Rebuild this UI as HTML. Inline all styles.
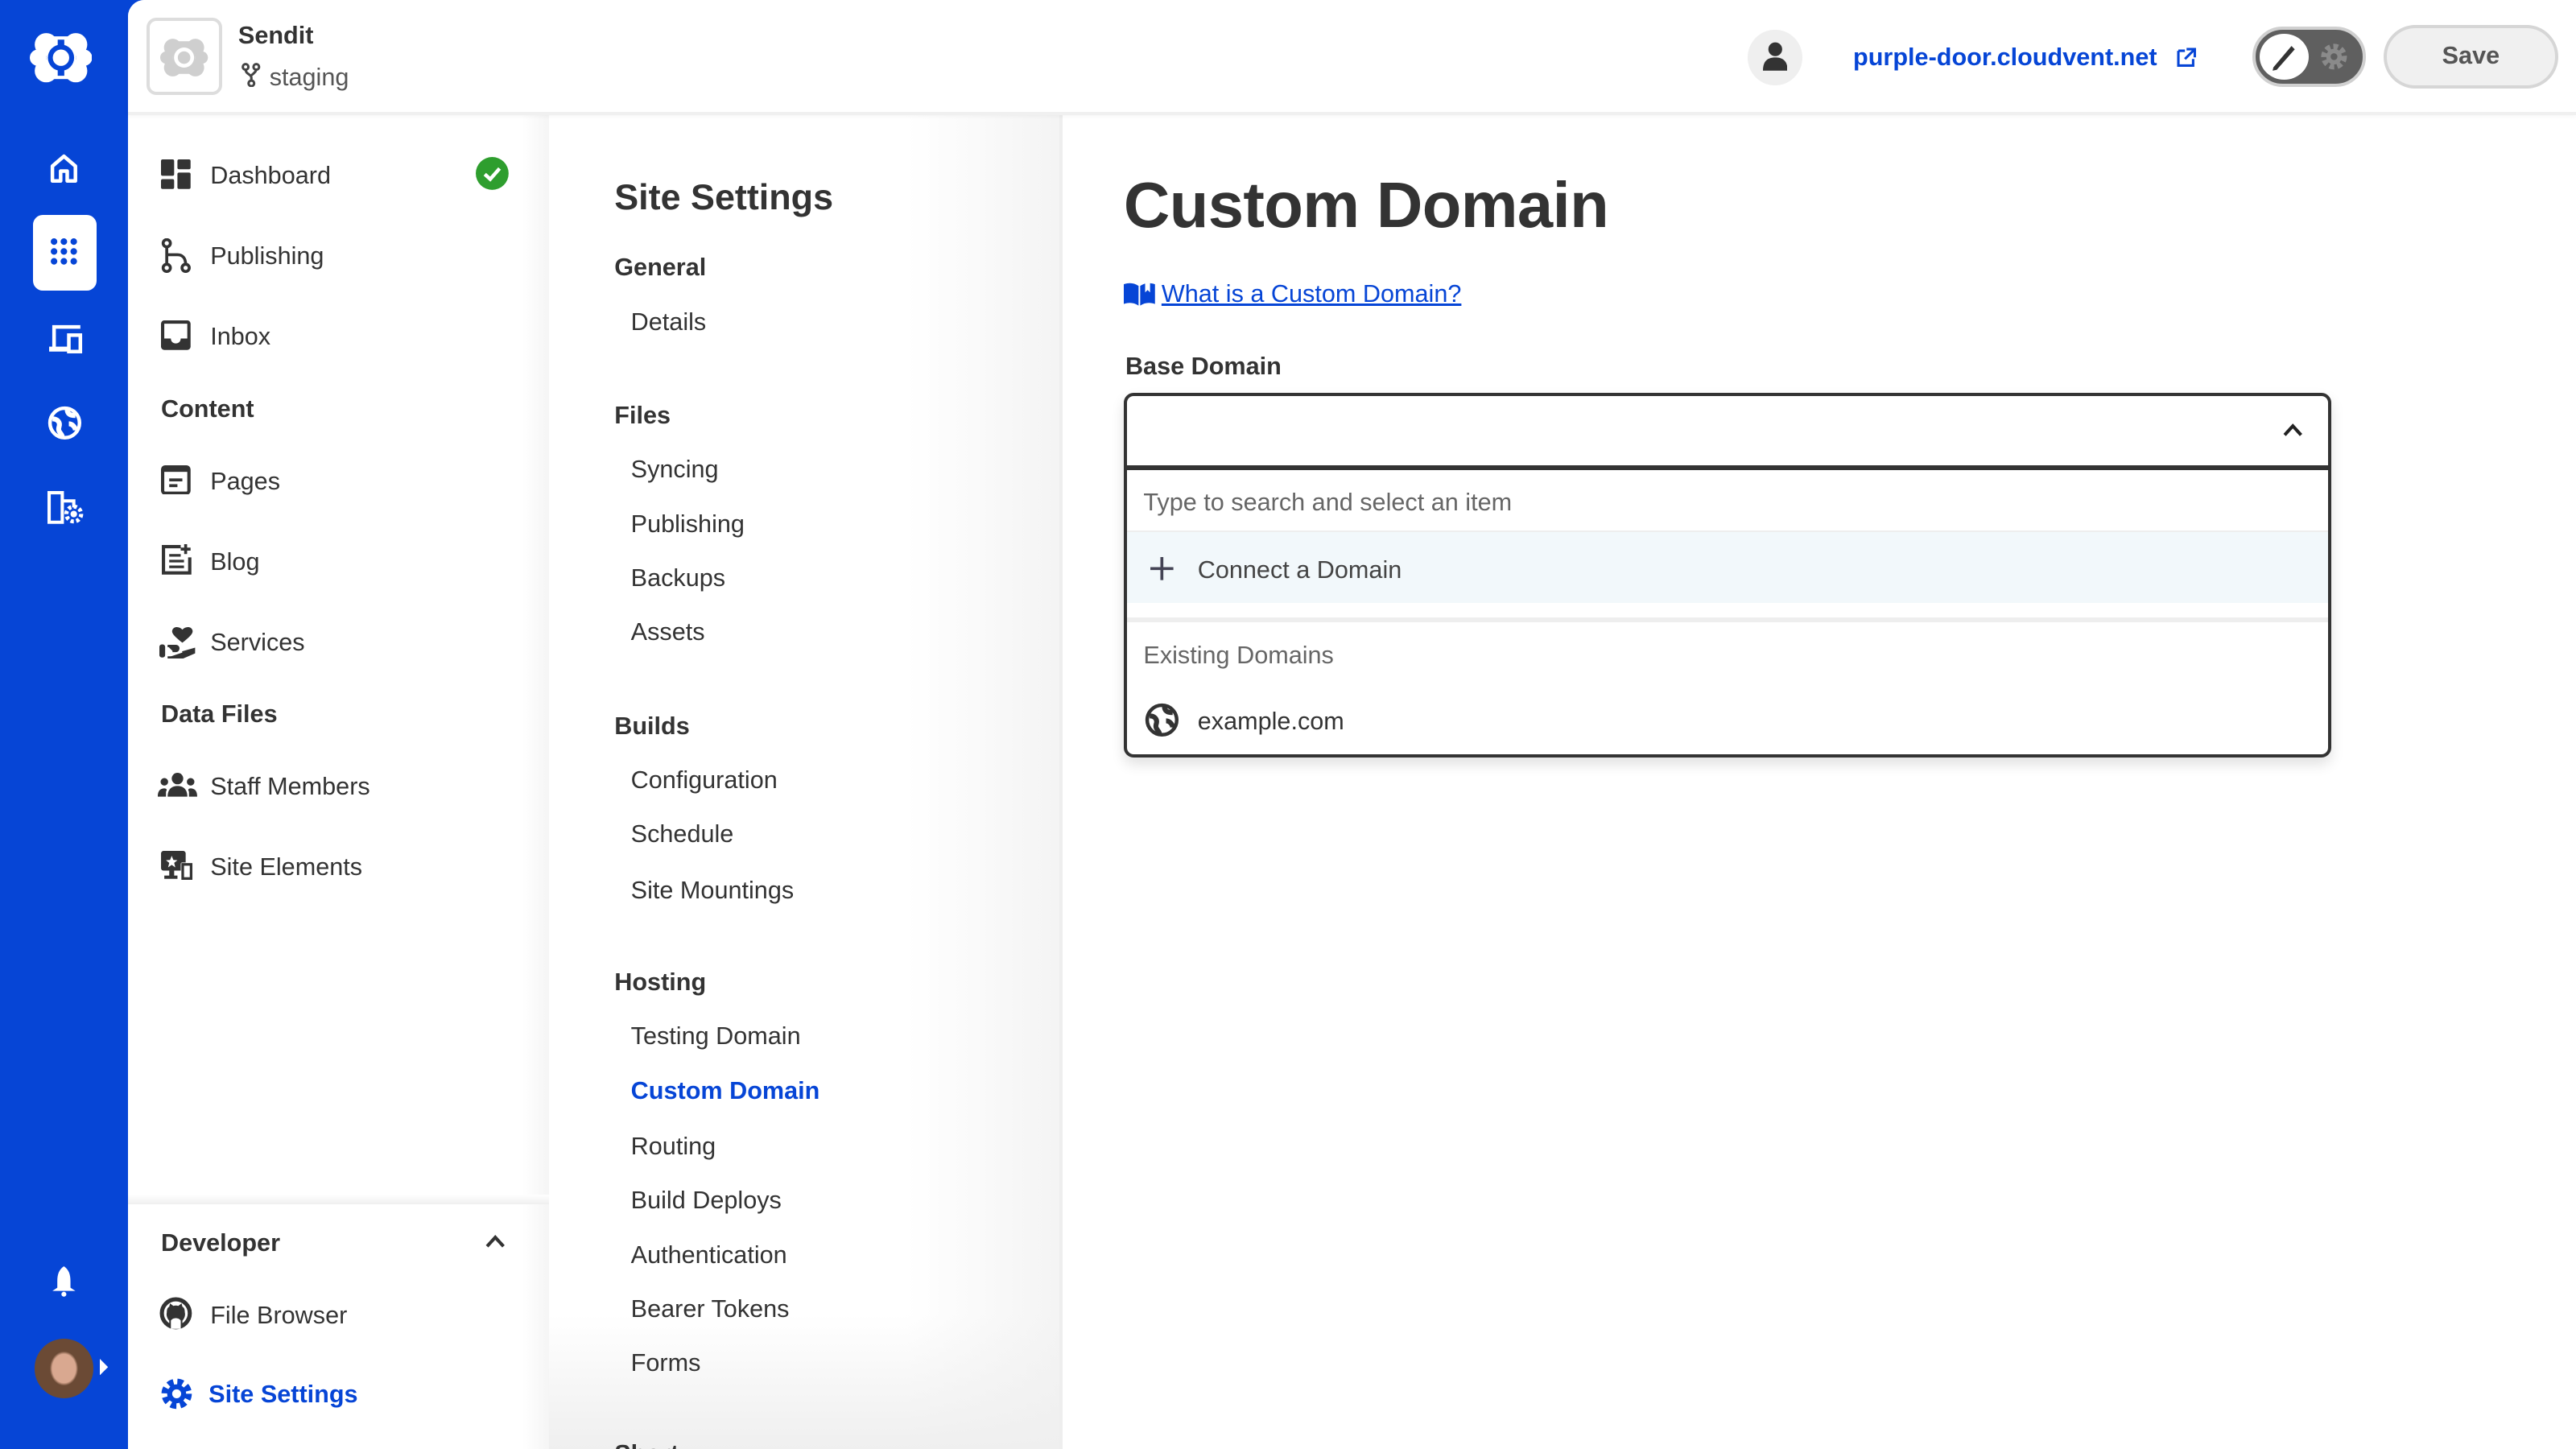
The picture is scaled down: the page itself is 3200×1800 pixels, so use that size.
<!DOCTYPE html>
<html><head><meta charset="utf-8"><style>
*{margin:0;padding:0;box-sizing:border-box}
html,body{width:3200px;height:1800px;overflow:hidden;background:#fff}
#w{zoom:2.040816;width:1568px;height:882px;position:relative;font-family:"Liberation Sans",sans-serif;color:#333;overflow:hidden}
.t{position:absolute;line-height:20px;white-space:nowrap;font-size:15px}
.b{font-weight:bold}
.ab{position:absolute}
svg{position:absolute}
</style></head><body><div id="w">
<div class="ab" style="left:0;top:0;width:90px;height:882px;background:#0645d6"></div>
<div class="ab" style="left:78px;top:0;width:1490px;height:882px;background:#fff;border-top-left-radius:10px"></div>
<div class="ab" style="left:334px;top:69px;width:311px;height:813px;background:linear-gradient(90deg,#fff 0%,#fff 70%,#f4f4f4 100%)"></div>
<div class="ab" style="left:645px;top:69px;width:2px;height:813px;background:#eee"></div>
<div class="ab" style="left:318px;top:69px;width:16px;height:813px;background:linear-gradient(90deg,#fff,#f5f5f5)"></div>
<div class="ab" style="left:334px;top:800px;width:311px;height:82px;background:linear-gradient(180deg,rgba(244,244,244,0),#efefef)"></div>
<div class="ab" style="left:78px;top:0;width:1490px;height:68px;background:#fff;border-top-left-radius:10px;box-shadow:0 2px 3px rgba(0,0,0,.06)"></div>
<div class="ab" style="left:78px;top:68px;width:1490px;height:2px;background:#f0f0f0"></div>

<svg style="left:18px;top:18px" width="38" height="34" viewBox="0 0 38 34"><g fill="#fff"><circle cx="10" cy="9" r="7"/><circle cx="28" cy="9" r="7"/><circle cx="10" cy="25" r="7"/><circle cx="28" cy="25" r="7"/><circle cx="5" cy="17" r="5"/><circle cx="33" cy="17" r="5"/><rect x="10" y="4" width="18" height="26"/></g><circle cx="19" cy="17" r="8" fill="#0645d6"/><circle cx="19" cy="17" r="5" fill="#fff"/><rect x="17" y="6" width="4" height="5" fill="#0645d6"/><rect x="17" y="23" width="4" height="5" fill="#0645d6"/></svg>
<svg style="left:29px;top:92px" width="20" height="20" viewBox="0 0 20 20"><path d="M3 9 L10 3 L17 9 V18 H12 V12 H8 V18 H3 Z" fill="none" stroke="#fff" stroke-width="2.2" stroke-linejoin="round"/></svg>
<div class="ab" style="left:20px;top:131px;width:39px;height:46px;background:#fff;border-radius:6px"></div>
<svg style="left:30px;top:144px" width="18" height="18" viewBox="0 0 18 18"><g fill="#0645d6"><circle cx="3" cy="3" r="2"/><circle cx="9" cy="3" r="2"/><circle cx="15" cy="3" r="2"/><circle cx="3" cy="9" r="2"/><circle cx="9" cy="9" r="2"/><circle cx="15" cy="9" r="2"/><circle cx="3" cy="15" r="2"/><circle cx="9" cy="15" r="2"/><circle cx="15" cy="15" r="2"/></g></svg>
<svg style="left:29px;top:196px" width="22" height="20" viewBox="0 0 22 20"><path d="M4 16 V3 H20" fill="none" stroke="#fff" stroke-width="2.2"/><rect x="1" y="15" width="12" height="3" fill="#fff"/><rect x="13" y="8" width="7" height="10" fill="none" stroke="#fff" stroke-width="2.2"/></svg>
<svg style="left:29px;top:247px" width="21" height="21" viewBox="0 0 21 21"><circle cx="10.5" cy="10.5" r="9" fill="none" stroke="#fff" stroke-width="2.2"/><path d="M3 8 C6 8 8 10 7 13 C6 16 9 17 9 19 M12 2 C12 5 14 6 17 6 M13 11 C15 11 17 13 17 15" fill="none" stroke="#fff" stroke-width="3"/></svg>
<svg style="left:29px;top:299px" width="22" height="20" viewBox="0 0 22 20"><path d="M1 1 H9 V19 H1 Z M9 6 H16 V10" fill="none" stroke="#fff" stroke-width="2"/><g fill="#0645d6"><rect x="3" y="4" width="2" height="2"/><rect x="3" y="9" width="2" height="2"/><rect x="3" y="14" width="2" height="2"/></g><circle cx="16" cy="14" r="4.5" fill="none" stroke="#fff" stroke-width="2.5" stroke-dasharray="2 1.5"/><circle cx="16" cy="14" r="2" fill="#fff"/></svg>
<svg style="left:30px;top:770px" width="18" height="20" viewBox="0 0 18 20"><path d="M9 1 C6 3 5 6 5 10 V14 L2 16 H16 L13 14 V10 C13 6 12 3 9 1 Z" fill="#fff"/><circle cx="9" cy="18" r="1.5" fill="#fff"/></svg>
<div class="ab" style="left:21px;top:815px;width:36px;height:36px;border-radius:50%;background:radial-gradient(ellipse 40% 48% at 50% 50%,#d9a890 0 50%,#6b4a35 60%),#7c8a6a"></div>
<svg style="left:61px;top:827px" width="6" height="10"><path d="M0 0 L5 5 L0 10 Z" fill="#fff"/></svg>

<div class="ab" style="left:89px;top:11px;width:46px;height:47px;border:2px solid #ddd;border-radius:6px;background:#fff"></div>
<svg style="left:96px;top:22px" width="32" height="26" viewBox="0 0 38 34"><g fill="#cfcfcf"><circle cx="10" cy="9" r="7"/><circle cx="28" cy="9" r="7"/><circle cx="10" cy="25" r="7"/><circle cx="28" cy="25" r="7"/><circle cx="5" cy="17" r="5"/><circle cx="33" cy="17" r="5"/><rect x="10" y="4" width="18" height="26"/></g><circle cx="19" cy="17" r="8" fill="#fff"/><circle cx="19" cy="17" r="5" fill="#cfcfcf"/></svg>
<div class="t b" style="left:145px;top:12px;font-size:15px">Sendit</div>
<svg style="left:147px;top:38px" width="12" height="15" viewBox="0 0 12 15"><g fill="none" stroke="#444" stroke-width="1.5"><circle cx="2.5" cy="2.5" r="1.7"/><circle cx="9" cy="2.5" r="1.7"/><circle cx="6" cy="12.5" r="1.7"/><path d="M2.5 4 C2.5 7 6 7 6 9 V11 M9 4 C9 6 6 7 6 8"/></g></svg>
<div class="t" style="left:164px;top:37px;font-size:15px;color:#555">staging</div>

<div class="ab" style="left:1064px;top:18px;width:33px;height:34px;border-radius:50%;background:#efefef"></div>
<svg style="left:1073px;top:25px" width="15" height="19" viewBox="0 0 15 19"><circle cx="7.5" cy="5" r="4.2" fill="#333"/><path d="M0 18 C0 12 3 10 7.5 10 C12 10 15 12 15 18 Z" fill="#333"/></svg>
<div class="t b" style="left:1128px;top:25px;font-size:15px;color:#0645d6">purple-door.cloudvent.net</div>
<svg style="left:1325px;top:29px" width="12" height="12" viewBox="0 0 12 12"><path d="M1 2 H5 M1 2 V11 H10 V7 M6 1 H11 V6 M11 1 L5 7" fill="none" stroke="#0645d6" stroke-width="1.5"/></svg>
<div class="ab" style="left:1371px;top:16px;width:69px;height:37px;border-radius:19px;background:#5f5f5f;border:2px solid #d0d0d0"></div>
<div class="ab" style="left:1374px;top:19px;width:33px;height:31px;border-radius:50%;background:#fff;border:1.5px solid #5f5f5f"></div>
<svg style="left:1381px;top:25px" width="18" height="19" viewBox="0 0 18 19"><path d="M3 16 L14 3 L16 5 L5 17.5 L2.5 18 Z" fill="#333"/></svg>
<svg style="left:1411px;top:25px" width="19" height="19" viewBox="0 0 20 20"><circle cx="10" cy="10" r="6.5" fill="none" stroke="#8a8a8a" stroke-width="3.5" stroke-dasharray="3 2"/><circle cx="10" cy="10" r="5" fill="#8a8a8a"/><circle cx="10" cy="10" r="2.2" fill="#5f5f5f"/></svg>
<div class="ab" style="left:1451px;top:15px;width:106px;height:39px;border-radius:20px;background:#f0f0f0;border:2px solid #d6d6d6"></div>
<div class="t b" style="left:1451px;top:24px;width:106px;text-align:center;font-size:15px;color:#555">Save</div>

<svg style="left:98px;top:97px" width="18" height="18" viewBox="0 0 18 18"><g fill="#333"><rect x="0" y="0" width="8" height="10" rx="1"/><rect x="10" y="0" width="8" height="6" rx="1"/><rect x="0" y="12" width="8" height="6" rx="1"/><rect x="10" y="8" width="8" height="10" rx="1"/></g></svg>
<div class="t" style="left:128px;top:97px">Dashboard</div>
<svg style="left:289px;top:95px" width="21" height="21" viewBox="0 0 21 21"><circle cx="10.5" cy="10.5" r="10" fill="#2e9e2e"/><path d="M6 11 L9.3 14 L15 7.5" fill="none" stroke="#fff" stroke-width="2.2"/></svg>
<svg style="left:98px;top:145px" width="19" height="21" viewBox="0 0 19 21"><g fill="none" stroke="#333" stroke-width="1.8"><circle cx="3.5" cy="3" r="2.2"/><circle cx="3.5" cy="18" r="2.2"/><circle cx="15" cy="18" r="2.2"/><path d="M3.5 5 V16 M3.5 10 H10 C13 10 15 12 15 16"/></g></svg>
<div class="t" style="left:128px;top:146px">Publishing</div>
<svg style="left:98px;top:195px" width="18" height="18" viewBox="0 0 18 18"><rect width="18" height="18" rx="2" fill="#333"/><path d="M2 2 H16 V11 H12 C12 13 10.5 14 9 14 C7.5 14 6 13 6 11 H2 Z" fill="#fff"/></svg>
<div class="t" style="left:128px;top:195px">Inbox</div>
<div class="t b" style="left:98px;top:239px">Content</div>
<svg style="left:98px;top:283px" width="18" height="18" viewBox="0 0 18 18"><rect x="1" y="1" width="16" height="16" rx="1.5" fill="none" stroke="#333" stroke-width="2"/><rect x="1" y="1" width="16" height="3" fill="#333"/><rect x="5" y="8" width="8" height="1.8" fill="#333"/><rect x="5" y="11.5" width="5" height="1.8" fill="#333"/></svg>
<div class="t" style="left:128px;top:283px">Pages</div>
<svg style="left:98px;top:331px" width="19" height="19" viewBox="0 0 19 19"><path d="M12 1.5 H1.5 V17.5 H17.5 V8" fill="none" stroke="#333" stroke-width="2"/><path d="M15 0 V6 M12 3 H18" stroke="#333" stroke-width="1.8"/><rect x="5" y="6" width="7" height="1.6" fill="#333"/><rect x="5" y="9.5" width="9" height="1.6" fill="#333"/><rect x="5" y="13" width="9" height="1.6" fill="#333"/></svg>
<div class="t" style="left:128px;top:332px">Blog</div>
<svg style="left:97px;top:381px" width="22" height="20" viewBox="0 0 22 20"><path d="M14 10 C9 6 7 4 8 2 C9 0 12 0 14 2 C16 0 19 0 20 2 C21 4 19 6 14 10 Z" fill="#333"/><rect x="0" y="11" width="3.5" height="8" rx="1.5" fill="#333"/><path d="M5 12 H10 C12 12 12 15 10 15 H8 M5 19 H14 L21 16 V14 L14 16" fill="#333" stroke="#333" stroke-width="1.5"/></svg>
<div class="t" style="left:128px;top:381px">Services</div>
<div class="t b" style="left:98px;top:425px">Data Files</div>
<svg style="left:96px;top:470px" width="24" height="16" viewBox="0 0 24 16"><g fill="#333"><circle cx="12" cy="4" r="3.5"/><circle cx="4" cy="6" r="2.3"/><circle cx="20" cy="6" r="2.3"/><path d="M6 15 C6 10 9 8.5 12 8.5 C15 8.5 18 10 18 15 Z"/><path d="M0 15 C0 11 2 10 4 10 C5 10 6 10.5 5 12 V15 Z"/><path d="M24 15 C24 11 22 10 20 10 C19 10 18 10.5 19 12 V15 Z"/></g></svg>
<div class="t" style="left:128px;top:469px">Staff Members</div>
<svg style="left:97px;top:517px" width="22" height="20" viewBox="0 0 22 20"><rect x="1" y="1" width="15" height="12" rx="1.5" fill="#333"/><rect x="6" y="13" width="3" height="4" fill="#333"/><rect x="3" y="16" width="8" height="2" fill="#333"/><path d="M7.5 4 L8.5 6.5 L11 6.7 L9 8.3 L9.7 11 L7.5 9.5 L5.3 11 L6 8.3 L4 6.7 L6.5 6.5 Z" fill="#fff"/><rect x="13" y="8" width="7.5" height="11" rx="1" fill="#fff"/><rect x="14.2" y="9.2" width="5.1" height="8.6" fill="none" stroke="#333" stroke-width="1.6"/></svg>
<div class="t" style="left:128px;top:518px">Site Elements</div>

<div class="ab" style="left:78px;top:727px;width:256px;height:6px;background:linear-gradient(180deg,#fff,#efefef)"></div>
<div class="t b" style="left:98px;top:747px">Developer</div>
<svg style="left:295px;top:751px" width="13" height="9" viewBox="0 0 13 9"><path d="M1.5 7.5 L6.5 2 L11.5 7.5" fill="none" stroke="#333" stroke-width="2"/></svg>
<svg style="left:97px;top:789px" width="20" height="21" viewBox="0 0 20 21"><circle cx="10" cy="10.5" r="8.5" fill="none" stroke="#333" stroke-width="2.5"/><path d="M6 19 V15 C5 14 4 12 4.5 10 C4.5 8 5 7 6 6.5 L6.5 4.5 L8.5 6 C9.5 5.7 10.5 5.7 11.5 6 L13.5 4.5 L14 6.5 C15 7 15.5 8 15.5 10 C16 12 15 14 14 15 V19 Z" fill="#333"/><path d="M7 15 C8 13 12 13 13 15 V20 H7 Z" fill="#fff"/></svg>
<div class="t" style="left:128px;top:791px">File Browser</div>
<svg style="left:97px;top:838px" width="21" height="21" viewBox="0 0 20 20"><circle cx="10" cy="10" r="6.8" fill="none" stroke="#0645d6" stroke-width="4" stroke-dasharray="3.2 2.2"/><circle cx="10" cy="10" r="5.5" fill="#0645d6"/><circle cx="10" cy="10" r="2.6" fill="#fff"/></svg>
<div class="t b" style="left:127px;top:839px;color:#0645d6">Site Settings</div>

<div class="t b" style="left:374px;top:108px;font-size:22px;line-height:24px">Site Settings</div>
<div class="t b" style="left:374px;top:153px">General</div>
<div class="t" style="left:384px;top:186px">Details</div>
<div class="t b" style="left:374px;top:243px">Files</div>
<div class="t" style="left:384px;top:276px">Syncing</div>
<div class="t" style="left:384px;top:309px">Publishing</div>
<div class="t" style="left:384px;top:342px">Backups</div>
<div class="t" style="left:384px;top:375px">Assets</div>
<div class="t b" style="left:374px;top:432px">Builds</div>
<div class="t" style="left:384px;top:465px">Configuration</div>
<div class="t" style="left:384px;top:498px">Schedule</div>
<div class="t" style="left:384px;top:532px">Site Mountings</div>
<div class="t b" style="left:374px;top:588px">Hosting</div>
<div class="t" style="left:384px;top:621px">Testing Domain</div>
<div class="t b" style="left:384px;top:654px;color:#0645d6">Custom Domain</div>
<div class="t" style="left:384px;top:688px">Routing</div>
<div class="t" style="left:384px;top:721px">Build Deploys</div>
<div class="t" style="left:384px;top:754px">Authentication</div>
<div class="t" style="left:384px;top:787px">Bearer Tokens</div>
<div class="t" style="left:384px;top:820px">Forms</div>
<div class="t b" style="left:374px;top:875px">Short</div>

<div class="t b" style="left:684px;top:101px;font-size:39px;line-height:48px;letter-spacing:-0.3px">Custom Domain</div>
<svg style="left:684px;top:171px" width="19" height="15" viewBox="0 0 19 15"><path d="M0 2 C3 1 6 1 9 3 V15 C6 13 3 13 0 14 Z" fill="#0645d6"/><path d="M10 3 C13 1 16 1 19 2 V14 C16 13 13 13 10 15 Z" fill="#0645d6"/><path d="M13 0 V7 L14.5 5.5 L16 7 V0" fill="#fff"/></svg>
<div class="t" style="left:707px;top:169px;color:#0645d6;text-decoration:underline">What is a Custom Domain?</div>
<div class="t b" style="left:685px;top:213px">Base Domain</div>
<div class="ab" style="left:684px;top:239px;width:735px;height:222px;border:2px solid #333;border-radius:6px;background:#fff;box-shadow:0 4px 8px rgba(0,0,0,.12)"></div>
<div class="ab" style="left:686px;top:283px;width:731px;height:3px;background:#333"></div>
<svg style="left:1389px;top:257px" width="13" height="10" viewBox="0 0 13 10"><path d="M1.5 8 L6.5 2.5 L11.5 8" fill="none" stroke="#222" stroke-width="2"/></svg>
<div class="t" style="left:696px;top:296px;color:#666">Type to search and select an item</div>
<div class="ab" style="left:686px;top:323px;width:731px;height:1px;background:#eee"></div>
<div class="ab" style="left:686px;top:324px;width:731px;height:43px;background:#f2f8fb"></div>
<svg style="left:699px;top:338px" width="16" height="16" viewBox="0 0 16 16"><path d="M8 1 V15 M1 8 H15" stroke="#445" stroke-width="1.8"/></svg>
<div class="t" style="left:729px;top:337px;color:#444">Connect a Domain</div>
<div class="ab" style="left:686px;top:376px;width:731px;height:3px;background:#eee"></div>
<div class="t" style="left:696px;top:389px;color:#666">Existing Domains</div>
<svg style="left:697px;top:428px" width="21" height="21" viewBox="0 0 21 21"><circle cx="10.5" cy="10.5" r="9" fill="none" stroke="#333" stroke-width="2.2"/><path d="M3 8 C6 8 8 10 7 13 C6 16 9 17 9 19 M12 2 C12 5 14 6 17 6 M13 11 C15 11 17 13 17 15" fill="none" stroke="#333" stroke-width="3"/></svg>
<div class="t" style="left:729px;top:429px">example.com</div>
</div></body></html>
